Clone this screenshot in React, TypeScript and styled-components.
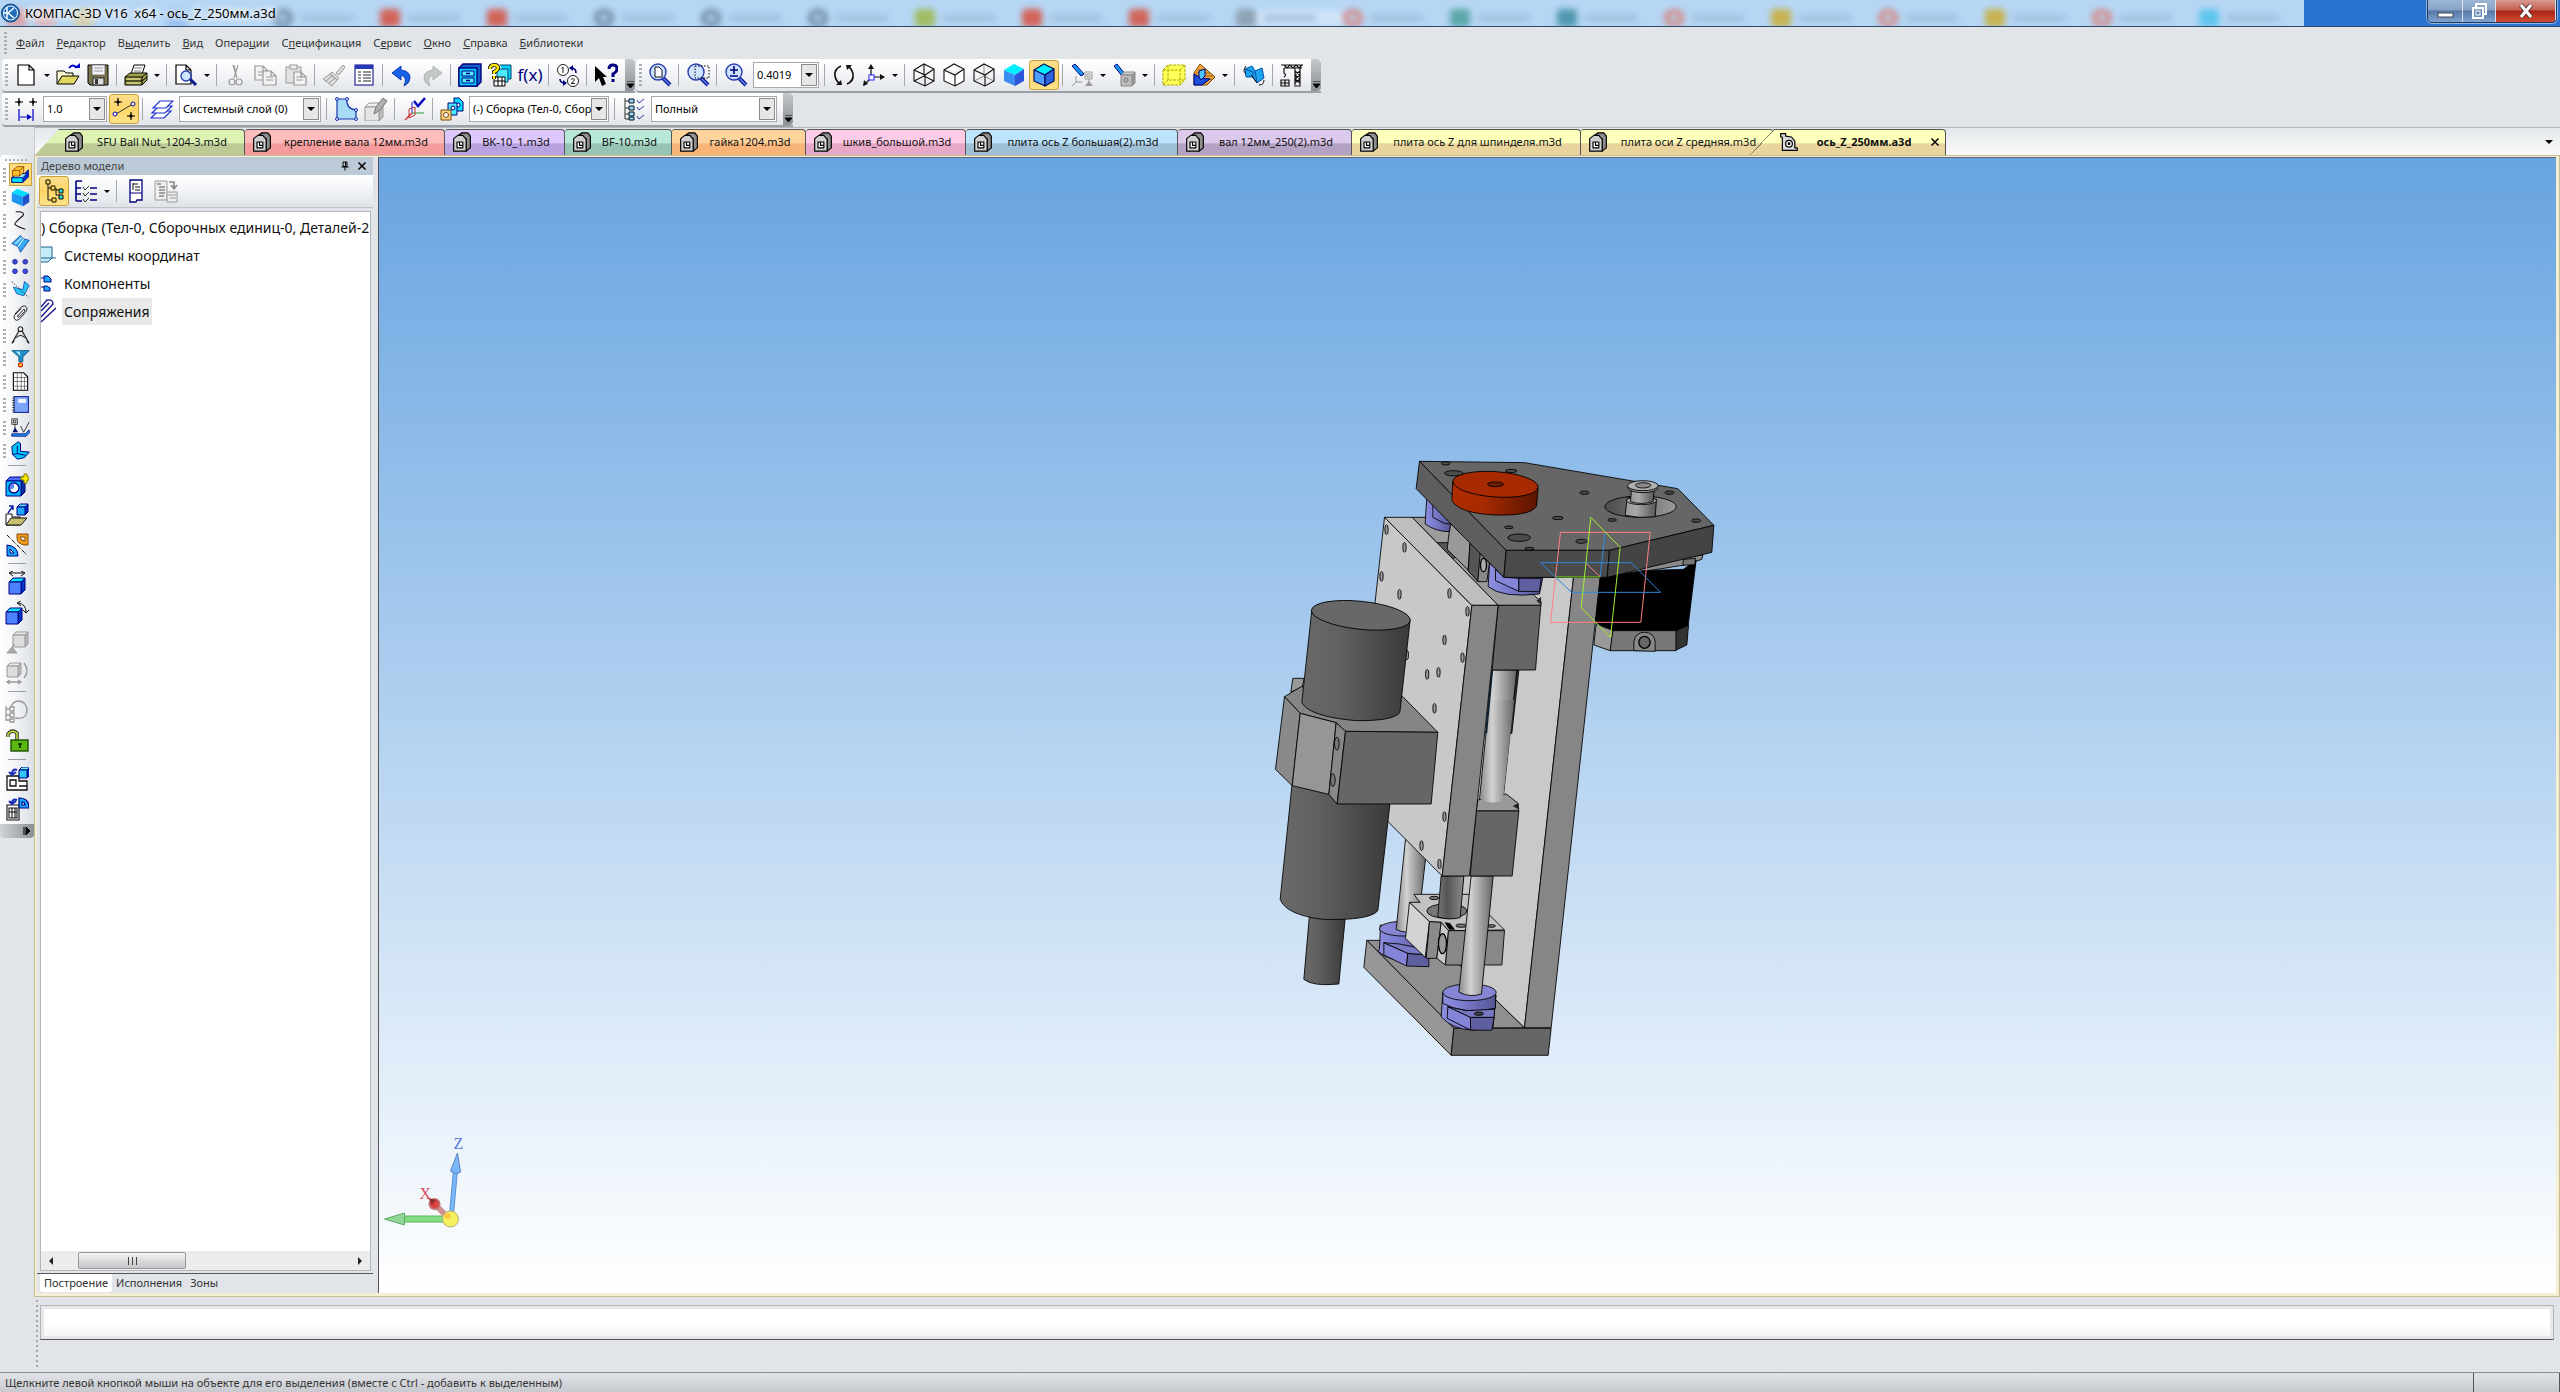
import React, { ReactNode } from "react";
import styled, { createGlobalStyle, css } from "styled-components";

const NAVY = "#000080";

const GlobalStyle = createGlobalStyle`
  * { box-sizing: border-box; }
  body { margin: 0; background: #e1e5e9; }
  button, select, input { font: inherit; color: inherit; margin: 0; }
  svg { display: block; }
`;

const Shell = styled.div`
  display: flex;
  flex-direction: column;
  height: 100vh;
  overflow: hidden;
  background: #e1e5e8;
  color: #111;
  font: 11px/16px "Noto Sans", "Open Sans", sans-serif;
`;

/* ---------- icons ---------- */

const Cube = ({ top = "#00f0ff", left = "#3a8cf0", right = "#2c55d8", line = "none" }) => (
  <g stroke={line} strokeWidth="1.2" strokeLinejoin="round">
    <path d="M2 7 L12 1 L22 6 L13 12 Z" fill={top} />
    <path d="M2 7 L13 12 V23 L2 18 Z" fill={left} />
    <path d="M22 6 L13 12 V23 L22 18 Z" fill={right} />
  </g>
);
const Box3 = ({ x = 4, y = 5, s = 12, d = 4, a = "#4d82ff", b = "#00e4ff", c = "#0038c8", k = NAVY }) => (
  <g stroke={k} strokeLinejoin="round">
    <path d={`M${x} ${y + d} l${d} ${-d} h${s} l${-d} ${d} z`} fill={b} />
    <path d={`M${x + s} ${y + d} l${d} ${-d} v${s} l${-d} ${d} z`} fill={c} />
    <rect x={x} y={y + d} width={s} height={s} fill={a} />
  </g>
);
const Lens = () => (
  <>
    <path d="M15 15 L22 22" stroke="#0a1a90" strokeWidth="4" />
    <path d="M15 15 L22 22" stroke="#6a8cff" strokeWidth="1.2" />
    <circle cx="10" cy="9" r="8" fill="#cfe4ff" stroke="#2a3fae" strokeWidth="1.4" />
  </>
);
const Page = ({ x = 4, y = 2, w = 14, h = 20, fill = "#fff", k = "#000" }) => (
  <path d={`M${x} ${y} h${w - 5} l5 5 v${h - 5} h${-w} z m${w - 5} 0 v5 h5`} fill={fill} stroke={k} strokeWidth="1.2" />
);
const Protractor = ({ x = 0, y = 0, fill = "#19a8ff", k = NAVY }) => (
  <path transform={`translate(${x} ${y})`} d="M0 0 Q10 0 10 10 H0 Z M3 4 Q6 4 6 7 H3 Z" fill={fill} stroke={k} fillRule="evenodd" strokeWidth="1.2" />
);

const icons: Record<string, ReactNode> = {
  newDoc: <Page x={4} y={2} w={16} h={20} />,
  open: (
    <>
      <path d="M1 21 V8 h7 l2 2 h7 v4" fill="#fffbd0" stroke="#000" />
      <path d="M1 21 L6 13 H23 L18 21 Z" fill="#e0d860" stroke="#000" />
      <path d="M13 5 q4 -5 8 0" fill="none" stroke="#00c" strokeWidth="2" />
      <path d="M18 5 h6 v-5 z" fill="#00c" />
    </>
  ),
  save: (
    <>
      <path d="M2 2 H22 V22 H4 L2 20 Z" fill="#7b7550" stroke="#000" />
      <rect x="6" y="2" width="13" height="10" fill="#f4f4f8" stroke="#555" strokeWidth=".7" />
      <path d="M8 5 h9 M8 8 h9" stroke="#999" />
      <rect x="7" y="15" width="11" height="7" fill="#ddd" stroke="#222" />
      <rect x="9" y="16" width="3" height="5" fill="#333" />
    </>
  ),
  print: (
    <>
      <path d="M7 11 L10 2 H21 L18 11 Z" fill="#fff" stroke="#000" />
      <path d="M10 5 h8 M10 8 h7" stroke="#777" />
      <path d="M1 14 L6 10 H23 V17 L18 22 H1 Z" fill="#a5a04c" stroke="#000" />
      <path d="M1 14 H18 L23 10 M18 14 V22 M1 18 H18 L23 14" fill="none" stroke="#000" />
      <path d="M3 16 H16 M3 20 H16" stroke="#eee8a0" />
    </>
  ),
  preview: (
    <>
      <Page x={2} y={2} w={15} h={19} />
      <path d="M16 16 L22 22" stroke="#0a1a90" strokeWidth="3" />
      <circle cx="12" cy="13" r="5" fill="#cfe4ff" stroke="#2a3fae" strokeWidth="1.4" />
    </>
  ),
  cut: (
    <g fill="none" stroke="#999" strokeWidth="1.2">
      <path d="M9 2 L13 15 M14 2 L10 15 M10 2 L12 12" />
      <circle cx="8" cy="19" r="3" />
      <circle cx="15" cy="19" r="3" />
    </g>
  ),
  copy: (
    <>
      <Page x={1} y={3} w={13} h={14} fill="#f2f2f2" k="#999" />
      <Page x={9} y={8} w={13} h={14} fill="#f2f2f2" k="#999" />
      <path d="M4 9 h6 M4 12 h4 M12 14 h7 M12 17 h7" stroke="#999" />
    </>
  ),
  paste: (
    <>
      <rect x="2" y="4" width="15" height="16" fill="#e2e2e2" stroke="#999" />
      <rect x="6" y="2" width="7" height="4" fill="#eee" stroke="#999" />
      <Page x={10} y={9} w={12} h={13} fill="#f4f4f4" k="#999" />
      <path d="M12 14 h7 M12 17 h7" stroke="#999" />
    </>
  ),
  brush: (
    <g stroke="#999" fill="#dedede">
      <path d="M14 10 L21 2 L23 4 L17 12 Z" />
      <path d="M10 9 L17 15 L15 17 L8 11 Z" />
      <path d="M8 11 L15 17 L10 23 Q5 19 1 16 Z" />
      <path d="M4 18 L10 13 M7 20 L13 15" />
    </g>
  ),
  props: (
    <>
      <rect x="3" y="2" width="18" height="20" fill="#fff" stroke={NAVY} />
      <rect x="3" y="2" width="18" height="4" fill="#2438b8" />
      <path d="M6 9 h3 M11 9 h8 M6 12 h3 M11 12 h8 M6 15 h3 M11 15 h8 M6 18 h3 M11 18 h8" stroke="#223" />
    </>
  ),
  undo: <path d="M2 10 L11 3 V7 Q20 8 20 15 Q20 20 14 23 Q18 14 11 12 V17 Z" fill="#1763e8" stroke="#0a3dab" />,
  redo: <path d="M22 10 L13 3 V7 Q4 8 4 15 Q4 20 10 23 Q6 14 13 12 V17 Z" fill="#c4c8c8" stroke="#b0b4b4" />,
  cabinet: (
    <>
      <path d="M1 5 L5 1 H23 V19 L19 23 H1 Z" fill="#1060c8" stroke={NAVY} strokeWidth="1.4" />
      <rect x="1" y="5" width="18" height="18" fill="#00cfff" stroke={NAVY} strokeWidth="1.4" />
      <path d="M4 8 h12 v5 h-12 z M4 15 h12 v5 h-12 z" fill="#58e8ff" stroke={NAVY} />
      <path d="M8 10.500 h4 M8 17.500 h4" stroke={NAVY} strokeWidth="1.6" />
    </>
  ),
  askTable: (
    <>
      <path d="M12 2 h11 v14 h-4" fill="#00cfff" stroke="#046" />
      <path d="M9 6 h11 v13 h-11 z" fill="#4de9ff" stroke="#046" />
      <path d="M6 14 h11 v9 h-11 z M6 18 h11 M10 14 v9 M14 14 v9" fill="#fff" stroke="#000" />
      <path d="M2 6 Q2 2 6 2 Q10 2 10 5 Q10 7 6 9 V11 M6 13 v3" fill="none" stroke="#000" strokeWidth="4" />
      <path d="M2 6 Q2 2 6 2 Q10 2 10 5 Q10 7 6 9 V11 M6 13 v3" fill="none" stroke="#ffe900" strokeWidth="2.400" />
    </>
  ),
  swap12: (
    <>
      <g fill="#fff" stroke="#222">
        <circle cx="7" cy="7" r="5.500" />
        <circle cx="17" cy="18" r="5.500" />
      </g>
      <path d="M7 4 v6 M5.500 5.500 L7 4 M15 16.500 q2 -2 3.500 0 q0 2 -3.500 4 h4" fill="none" stroke="#222" />
      <path d="M15 5 q5 0 5 5 M9 20 q-5 0 -5 -4" fill="none" stroke={NAVY} strokeWidth="1.6" />
      <path d="M13 5 l4 -3 v6 z M11 20 l-4 -3 v6 z" fill={NAVY} />
    </>
  ),
  help: (
    <>
      <path d="M1 3 V19 L5 15 L8 23 L12 21 L9 14 H13 Z" fill="#000" />
      <path d="M15 6 Q15 2 19 2 Q23 2 23 6 Q23 9 19 11 V14 M19 16 v3" fill="none" stroke={NAVY} strokeWidth="3" />
    </>
  ),
  zoomDoc: (
    <>
      <Lens />
      <path d="M7 4 h4 l3 3 v7 h-7 z" fill="#fff" stroke="#112" />
    </>
  ),
  zoomRect: (
    <>
      <Lens />
      <rect x="9" y="3" width="14" height="12" fill="none" stroke="#000" strokeDasharray="1.5 1.5" />
    </>
  ),
  zoomPM: (
    <>
      <Lens />
      <path d="M6 7 h8 M10 3 v8 M6 13 h8" stroke={NAVY} strokeWidth="1.6" />
    </>
  ),
  rotate: (
    <>
      <path d="M9 3 Q2 6 3 13 Q4 18 8 21 M15 21 Q22 18 21 11 Q20 6 16 3" fill="none" stroke="#111" strokeWidth="1.6" />
      <path d="M14 2 h6 l-5 5 z M10 22 h-6 l5 -5 z" fill="#111" />
    </>
  ),
  orient: (
    <>
      <path d="M9 13 V3 M11 14 H22 M8 16 L2 22" fill="none" stroke="#111" strokeWidth="1.2" />
      <path d="M9 1 l3 5 h-6 z M23 14 l-5 -3 v6 z M1 23 l1 -6 l4 4 z" fill="#111" />
      <rect x="7" y="12" width="5" height="5" fill="#fff" stroke="#22f" />
    </>
  ),
  wire: (
    <g fill="none" stroke="#111" strokeWidth="1.1">
      <path d="M2 7 L12 1 L22 6 V18 L13 23 L2 18 Z M2 7 L13 12 L22 6 M13 12 V23" />
      <path d="M12 1 V13 M2 18 L12 13 L22 18" />
    </g>
  ),
  hidden: <path d="M2 7 L12 1 L22 6 V18 L13 23 L2 18 Z M2 7 L13 12 L22 6 M13 12 V23" fill="#fff" stroke="#111" strokeWidth="1.1" />,
  thin: (
    <g fill="none" strokeWidth="1.1">
      <path d="M12 1 V13 M2 18 L12 13 L22 18" stroke="#999" />
      <path d="M2 7 L12 1 L22 6 V18 L13 23 L2 18 Z M2 7 L13 12 L22 6 M13 12 V23" stroke="#111" />
    </g>
  ),
  shade: <Cube />,
  shadeLine: <Cube left="#4d9dff" right="#2b62e0" line="#001060" />,
  torchDim: (
    <>
      <path d="M2 3 L5 1 L14 11 L11 13 Z" fill="#1696f0" stroke={NAVY} />
      <path d="M15 9 h7 v7 h-7 z M17 11 h3 v3 h-3 z M19 16 v4 M6 13 v6 h6 M6 19 l-4 4" fill="none" stroke="#999" />
      <path d="M15 23 h8 l-4 -5 z" fill="#999" />
    </>
  ),
  torchBox: (
    <>
      <path d="M2 3 L5 1 L13 11 L10 13 Z" fill="#1696f0" stroke={NAVY} />
      <Box3 x={9} y={9} s={11} d={3} a="#bbb" b="#ccc" c="#999" k="#888" />
      <circle cx="14" cy="17" r="2" fill="none" stroke="#777" />
    </>
  ),
  yellowCube: (
    <>
      <path d="M1 7 L6 2 H23 V17 L18 22 H1 Z" fill="#ffff5a" />
      <g fill="none" stroke="#b0ac00" strokeDasharray="3 1">
        <path d="M1 7 L6 2 H23 V17 L18 22 H1 Z M1 7 H18 V22 M18 7 L23 2" />
        <path d="M6 2 V17 H23 M6 17 L1 22" />
      </g>
    </>
  ),
  section: (
    <>
      <path d="M2 10 L8 1 L23 14 L15 22 H2 Z" fill="#f2a83c" stroke="#7a4a00" />
      <path d="M6 7 h8 M4 10 h14 M4 13 h17 M5 16 h15" stroke="#7a4a00" strokeWidth=".8" />
      <path d="M2 11 L9 15 L18 16 L10 22 H2 Z" fill="#1b50d8" stroke={NAVY} />
      <path d="M7 14 V8 L13 6 V13 L9 17 Z" fill="#4dc8ff" stroke={NAVY} />
    </>
  ),
  rebuild: (
    <>
      <path d="M3 6 L10 3 L13 8 L20 5 L22 15 L15 20 L11 14 L4 14 Z" fill="#1ba4ee" stroke="#0552b0" />
      <path d="M3 6 L11 9 V14 M13 8 l2 12" fill="none" stroke="#0552b0" />
      <path d="M4 3 q-4 5 0 8 M9 12 L15 20 M17 22 q5 0 5 -5" fill="none" stroke="#111" />
    </>
  ),
  crane: (
    <g fill="none" stroke="#111" strokeWidth="1.2">
      <path d="M1 2 H23 M4 5 H22 M4 2 l3 3 l3 -3 l3 3 l3 -3 l3 3 l3 -3" />
      <path d="M15 5 V22 M20 5 V22 M15 8 l5 4 l-5 4 l5 4 M20 8 l-5 4 l5 4 l-5 4 M14 23 h7" />
      <path d="M4 5 v5 q3 2 0 4 M1 17 h8 v6 h-8 z M5 17 v6 M1 20 h8" />
    </g>
  ),
  step: (
    <>
      <path d="M5 1 v8 M1 5 h8 M19 1 v8 M15 5 h8" stroke="#000" strokeWidth="1.2" />
      <path d="M5 3 l2 2 l-2 2 l-2 -2 z M19 3 l2 2 l-2 2 l-2 -2 z" fill="#000" />
      <path d="M5 12 v12 M19 12 v12 M6 20 h10" stroke="#0000c8" strokeWidth="1.2" />
      <path d="M18 20 l-5 -3 v6 z" fill="#0000c8" />
    </>
  ),
  snap: (
    <>
      <path d="M6 1 v8 M2 5 h8 M19 15 v8 M15 19 h8" stroke="#000" strokeWidth="1.2" />
      <path d="M6 3 l2 2 l-2 2 l-2 -2 z M19 17 l2 2 l-2 2 l-2 -2 z" fill="#000" />
      <path d="M4 17 L19 8" stroke="#333" />
      <circle cx="3" cy="17" r="2" fill="#fff" stroke="#00a" />
      <circle cx="21" cy="7" r="2" fill="#fff" stroke="#00a" />
    </>
  ),
  layers: (
    <g fill="#fff" stroke="#2030d0" strokeWidth="1.2">
      <path d="M1 21 L8 14 H21 L14 21 Z" />
      <path d="M2 16 L9 9 H22 L15 16 Z" />
      <path d="M3 11 L10 4 H23 L16 11 Z" />
    </g>
  ),
  sketch: (
    <>
      <path d="M3 2 H13 Q12 12 22 13 V22 H3 Z" fill="#a8dcf4" stroke="#1636b0" strokeWidth="1.2" />
      <g fill="#dfe8ff" stroke="#1636b0">
        <circle cx="3" cy="2" r="1.500" />
        <circle cx="13" cy="2" r="1.500" />
        <circle cx="22" cy="13" r="1.500" />
        <circle cx="22" cy="22" r="1.500" />
        <circle cx="3" cy="22" r="1.500" />
      </g>
    </>
  ),
  editGray: (
    <>
      <Box3 x={1} y={6} s={14} d={4} a="#e4e4e4" b="#eee" c="#bbb" k="#999" />
      <path d="M10 17 L12 10 L19 1 L23 4 L16 13 Z" fill="#b0b0b0" stroke="#777" />
    </>
  ),
  axes: (
    <>
      <path d="M10 5 V16" stroke="#22c" />
      <path d="M10 16 H22" stroke="#2a9a3a" />
      <path d="M10 16 L3 23" stroke="#d33" strokeWidth="1.500" />
      <path d="M7 12 l6 -2 v8 l-6 3 z" fill="none" stroke="#b33" />
      <path d="M12 4 L16 9 L23 1" fill="none" stroke="#0a0ac0" strokeWidth="2.500" />
    </>
  ),
  assembly: (
    <>
      <path d="M14 1 h5 l4 4 v9 h-9 z" fill="#00dcff" stroke={NAVY} />
      <circle cx="18" cy="8" r="2" fill="#fff" stroke={NAVY} />
      <path d="M8 6 h9 v12 h-9 z" fill="#4de9ff" stroke={NAVY} />
      <circle cx="13" cy="11" r="2" fill="#fff" stroke={NAVY} />
      <path d="M1 13 h10 v10 h-10 z" fill="#ffcf8a" stroke="#7a4a00" />
      <circle cx="6" cy="18" r="2.500" fill="#fff" stroke="#7a4a00" />
    </>
  ),
  treeCheck: (
    <>
      <path d="M3 1 V22 M3 4 h4 M3 11 h4 M3 17 h4 M3 22 h4" fill="none" stroke="#333" />
      <path d="M7 2 h5 v4 h-5 z M7 9 h5 v4 h-5 z M7 15 h5 v4 h-5 z M7 20 h5 v3 h-5 z" fill="#9ad8f0" stroke="#012" />
      <path d="M15 3 l2 3 l5 -4 M15 10 l2 3 l5 -4 M15 19 l2 3 l5 -4" fill="none" stroke="#33a" />
    </>
  ),
  part: (
    <g stroke="#000" strokeWidth="1.4" strokeLinejoin="round">
      <path d="M8 4 L12 1 H19 L22 5 V19 L17 23 V8 H8 Z" fill="#8e8e8e" />
      <path d="M2 8 L7 4 H13 L17 9 V23 H2 Z" fill="#d0d0d0" />
      <rect x="6" y="12" width="7" height="7" fill="#fff" />
      <path d="M9 12 v4 h4" fill="none" />
    </g>
  ),
  asm: (
    <g stroke="#000" strokeWidth="1.4" strokeLinejoin="round">
      <path d="M2 2 h6 v3 l7 1 l4 5 v8 h3 v3 H4 V6 H2 Z" fill="#d8d8d8" />
      <circle cx="12" cy="14" r="4" fill="#fff" />
      <circle cx="12" cy="14" r="1" fill="#000" />
    </g>
  ),
  tree: (
    <>
      <path d="M6 3 V21 h6 M6 9 h5 M14 9 V16 h4 M14 11 h4" fill="none" stroke="#111" />
      <path d="M4 1 h4 v4 h-4 z M9 7 h4 v4 h-4 z M10 19 h4 v4 h-4 z" fill="#ffd84a" stroke="#111" />
      <path d="M17 10 h4 v4 h-4 z M17 16 h4 v4 h-4 z" fill="#30d8c8" stroke="#111" />
    </>
  ),
  listMode: (
    <>
      <path d="M2 2 V22 M2 2 h6 M2 9 h5 M2 15 h5 M2 22 h6 M16 9 h7 M16 15 h7 M16 21 h7" fill="none" stroke={NAVY} strokeWidth="1.6" />
      <path d="M9 8 l2 3 l4 -4 M9 14 l2 3 l4 -4 M9 20 l2 3 l4 -4" fill="none" stroke="#333" />
    </>
  ),
  docTree: (
    <>
      <path d="M6 1 h12 v20 h-5 l-1 2 h-6 z" fill="#fff" stroke={NAVY} strokeWidth="1.3" />
      <path d="M9 4 v7 M9 5 h5 M11 8 h5 M11 11 h5" stroke="#111" fill="none" />
      <path d="M6 14 h12" stroke={NAVY} />
    </>
  ),
  docGray: (
    <>
      <path d="M1 2 h12 v19 h-12 z" fill="#eee" stroke="#999" />
      <path d="M3 5 h4 M5 8 h6 M5 11 h6 M5 14 h6 M5 17 h5" stroke="#888" strokeWidth="1.6" />
      <path d="M13 13 h10 v10 h-10 z M14 16 h8 M16 19 h6" fill="#eee" stroke="#999" />
      <path d="M15 3 h5 v6 M17 6 l3 4 l3 -4" fill="none" stroke="#888" strokeWidth="1.6" />
    </>
  ),
  pinned: <path d="M8 4 h8 v9 h-8 z M13 4 v9 M5 14 h14 M12 14 v7" fill="none" stroke="#000" strokeWidth="2" />,
  close: <path d="M5 5 L19 19 M19 5 L5 19" stroke="#000" strokeWidth="3" />,
  solid: (
    <g stroke={NAVY} strokeLinejoin="round">
      <path d="M1 16 L8 11 H17 L22 6 V15 L15 22 H1 Z" fill="#0030d0" />
      <path d="M1 16 H15 V22 H1 Z" fill="#00e4ff" />
      <path d="M1 16 L8 11 H20 L15 16 Z" fill="#8cf0ff" />
      <path d="M2 7 L8 2 H16 V9 L11 14 H2 Z" fill="#ffc02e" stroke="#8a3c00" />
      <path d="M2 7 H11 V14 M11 7 L16 2" fill="none" stroke="#8a3c00" />
    </g>
  ),
  cubeBlue: (
    <>
      <path d="M1 6 L8 1 L23 7 L15 11 Z" fill="#00dcff" />
      <path d="M1 6 L15 11 V23 L1 17 Z" fill="#1c96f2" />
      <path d="M15 11 L23 7 V18 L15 23 Z" fill="#1e50c8" />
    </>
  ),
  curve: <path d="M6 1 Q18 0 15 6 Q4 15 5 17 Q8 20 18 23" fill="none" stroke="#111" strokeWidth="1.4" />,
  surface: (
    <>
      <path d="M1 12 L12 2 L16 6 L23 8 L12 23 L9 16 Z" fill="#37a8f2" stroke="#103e9c" />
      <path d="M9 16 L16 6 M5 13 L14 4" stroke="#c0ecff" strokeWidth="1.500" />
    </>
  ),
  dots: (
    <g fill="#3d4ad8" stroke="#1a1f90">
      <circle cx="5" cy="6" r="3" />
      <circle cx="18" cy="6" r="3" />
      <circle cx="5" cy="18" r="3" />
      <circle cx="18" cy="18" r="3" />
    </g>
  ),
  aux: (
    <>
      <path d="M3 9 L15 12 L17 2 L23 7 L16 20 L7 17 Z" fill="#27c4f4" stroke="#0a4ab0" />
      <path d="M1 2 L22 22" stroke="#111" strokeDasharray="2 1.5" />
    </>
  ),
  clip: <path d="M5 14 L13 5 Q18 2 20 6 Q21 9 18 12 L11 20 Q6 24 4 19 Q3 16 6 14 L13 7 M9 16 L16 8 Q19 8 17 11 L10 18 Q7 18 9 15" fill="none" stroke="#222" strokeWidth="1.2" />,
  compass: (
    <>
      <path d="M12 1 a3 3 0 1 1 -.1 0 M10 6 L1 22 L4 19 M14 6 L23 22 L20 19 M6 15 Q12 9 18 15" fill="none" stroke="#111" strokeWidth="1.3" />
      <path d="M10 8 L4 19 M14 8 L20 19" stroke="#888" />
    </>
  ),
  filter: (
    <>
      <path d="M1 2 H23 L15 10 V16 H10 V10 Z" fill="#1c90c8" stroke="#0a5080" />
      <path d="M6 3 h5 l1 6 z" fill="#b6ecff" />
      <circle cx="12" cy="20" r="2.500" fill="#ffe840" stroke="#d01800" strokeWidth="1.500" />
    </>
  ),
  grid: (
    <>
      <path d="M3 1 H16 L21 6 V23 H3 Z" fill="#fff" stroke="#000" strokeWidth="1.4" />
      <path d="M3 7 H21 M3 12 H21 M3 18 H21 M8 1 V23 M13 1 V23 M17 6 V23" stroke="#555" strokeWidth=".9" />
    </>
  ),
  book: (
    <>
      <rect x="4" y="2" width="18" height="20" fill="#7ca4f8" stroke="#1a2c90" strokeWidth="1.4" />
      <rect x="9" y="5" width="10" height="5" fill="#eef4ff" />
      <path d="M3 3 V22" stroke="#333" strokeWidth="2.500" strokeDasharray="1.5 1.5" />
    </>
  ),
  rough: (
    <>
      <path d="M1 1 h7 v7 h-7 z M3 3 h3 v3 h-3 z M5 8 v10" fill="none" stroke="#111" />
      <path d="M2 18 h7 l-4 -6 z" fill="#000a60" />
      <path d="M12 10 l4 8 l7 -13" fill="none" stroke="#111" />
      <path d="M1 20 h17 l5 -5 v4 l-4 4 h-18 z" fill="#1c96f2" stroke={NAVY} />
    </>
  ),
  angle: (
    <g stroke={NAVY} strokeLinejoin="round" strokeWidth="1.2">
      <path d="M1 7 L9 1 L12 3 V13 L23 14 L17 21 L8 23 L2 17 Z" fill="#00c4f4" />
      <path d="M8 6 V16 L2 17 M8 16 L18 18" fill="none" />
    </g>
  ),
  addHole: (
    <>
      <Box3 x={1} y={4} s={15} d={4} a="#00b8ff" b="#4d6cff" c="#0030a0" />
      <circle cx="9" cy="15" r="5" fill="#fff" stroke={NAVY} strokeWidth="1.4" />
      <path d="M9 10 a5 5 0 0 0 -4 7 l4 -2 z" fill="#5f84f4" />
      <path d="M16 4 h3 v-3 h3 v3 h2 v3 h-2 v3 h-3 v-3 h-3 z" fill="#ffee00" stroke="#8a8000" />
    </>
  ),
  fromFile: (
    <>
      <path d="M1 22 V11 h6 v3 h8 v8 z" fill="#fff" stroke="#111" />
      <path d="M1 22 L6 15 H22 L16 22 Z" fill="#c8c070" stroke="#111" />
      <Box3 x={12} y={1} s={8} d={3} a="#1ba8ff" b="#5fe0ff" c="#0030c8" />
      <path d="M3 10 L8 3 M4 3 h4 v4" fill="none" stroke="#0a1aa0" strokeWidth="1.4" />
    </>
  ),
  mirror: (
    <>
      <path d="M2 2 L22 22" stroke="#111" strokeDasharray="4 1 1 1" />
      <path d="M12 1 h11 v11 h-3 q-8 -1 -8 -7 z M15 4 h5 v4 q-4 0 -5 -4 z" fill="#f09a20" fillRule="evenodd" stroke="#8a4a00" />
      <path d="M2 12 v11 h11 q0 -10 -11 -11 z M5 16 v4 h4 z" fill="#1ba8ff" fillRule="evenodd" stroke={NAVY} />
    </>
  ),
  moveBox: (
    <>
      <path d="M5 2 h14 M8 0 l-4 2 l4 3 M16 0 l4 2 l-4 3" fill="none" stroke="#111" />
      <Box3 x={4} y={7} s={12} d={4} />
    </>
  ),
  turnBox: (
    <>
      <Box3 x={1} y={7} s={12} d={4} />
      <path d="M13 2 Q21 3 21 11 M16 0 l-4 2 l4 3 M18 9 l3 3 l3 -3" fill="none" stroke="#111" />
    </>
  ),
  grayFix: (
    <>
      <Box3 x={8} y={1} s={12} d={3} a="#ddd" b="#eee" c="#bbb" k="#999" />
      <path d="M2 22 h10 l-5 -6 z M7 16 l3 -3" fill="#aaa" stroke="#999" />
    </>
  ),
  grayTurn: (
    <>
      <Box3 x={2} y={2} s={11} d={3} a="#ddd" b="#eee" c="#bbb" k="#999" />
      <path d="M19 2 q6 8 0 15 M2 21 h14 M5 19 l-3 2 l3 2 M13 19 l3 2 l-3 2" fill="none" stroke="#999" strokeWidth="1.3" />
    </>
  ),
  grayLink: (
    <g fill="none" stroke="#999" strokeWidth="1.3">
      <path d="M6 8 Q8 2 14 2 Q22 3 22 12 Q21 21 10 19" />
      <path d="M1 7 V22 M1 10 h4 M1 16 h4 M1 21 h4 M5 8 h4 v4 h-4 z M5 14 h4 v4 h-4 z M5 20 h4 v3 h-4 z" />
    </g>
  ),
  lock: (
    <>
      <path d="M3 8 V5 Q7 0 12 4 V11" fill="none" stroke="#333" strokeWidth="3.500" />
      <path d="M3 8 V5 Q7 0 12 4 V11" fill="none" stroke="#c8e838" strokeWidth="1.500" />
      <rect x="6" y="11" width="17" height="11" fill="#5cb810" stroke="#1a5000" strokeWidth="1.4" />
      <path d="M13 15 h4 M15 15 v4" stroke="#002000" strokeWidth="1.500" />
    </>
  ),
  toDrawing: (
    <>
      <path d="M2 9 h12 v5 h8 v9 h-20 z M5 13 h6 v6 h-6 z M14 19 h8" fill="#fff" stroke="#111" strokeWidth="1.3" />
      <Box3 x={14} y={0} s={8} d={3} a="#2fc8ff" b="#6ff0ff" c="#0030c8" />
      <path d="M12 3 Q7 1 7 8 M4 5 l3 3 l4 -3" fill="none" stroke="#1a2ab8" strokeWidth="2" />
    </>
  ),
  toSpec: (
    <>
      <path d="M2 8 h12 v15 h-12 z M4 11 h8 v10 h-8 z M7 11 v10 M10 11 v10 M4 15 h8" fill="#fff" stroke="#111" strokeWidth="1.1" />
      <Protractor x={14} y={1} />
      <path d="M12 3 Q7 1 7 7 M4 4 l3 3 l4 -3" fill="none" stroke="#1a2ab8" strokeWidth="2" />
    </>
  ),
};

const Icon = ({ name, size = 24 }: { name: string; size?: number }) => (
  <svg width={size} height={size} viewBox="0 0 24 24" aria-hidden="true">
    {icons[name]}
  </svg>
);

/* ---------- title bar ---------- */

const TitleBar = styled.header`
  position: relative;
  flex: none;
  display: flex;
  align-items: center;
  justify-content: space-between;
  height: 27px;
  padding: 0 3px 0 1px;
  border-bottom: 1px solid #2f4a6c;
  background: linear-gradient(90deg, #b6d6f4 0 90%, #2a72cf 90% 100%);
  overflow: hidden;
`;
const Backdrop = styled.div`
  position: absolute;
  inset: 0;
  display: flex;
  align-items: flex-end;
  padding-left: 7px;
  filter: blur(3px);
  opacity: .85;
`;
const Ghost = styled.span<{ $w: number; $active?: boolean }>`
  display: flex;
  align-items: center;
  flex: none;
  gap: 8px;
  width: ${(p) => p.$w}px;
  height: 16px;
  ${(p) => p.$active && "background: #d4e7fa;"}
`;
const Favicon = styled.i<{ $c: string; $ring?: boolean }>`
  width: 20px;
  height: 18px;
  border-radius: ${(p) => (p.$ring ? "50%" : "4px")};
  ${(p) => (p.$ring ? `border: 5px solid ${p.$c};` : `background: ${p.$c};`)}
`;
const GhostText = styled.i`
  width: 52px;
  height: 6px;
  background: #9dbad8;
`;
const AppName = styled.h1`
  position: relative;
  display: flex;
  align-items: center;
  gap: 5px;
  margin: 0;
  font-size: 13px;
  font-weight: 400;
  line-height: 20px;
  white-space: pre;
  color: #000;
  text-shadow: 0 0 6px #fff, 0 0 6px #fff, 0 0 10px #fff;
`;
const WinButtons = styled.div`
  position: relative;
  align-self: flex-start;
  display: flex;
  height: 23px;
  border: 1px solid #1d3a66;
  border-top: 0;
  border-radius: 0 0 5px 5px;
  overflow: hidden;
  box-shadow: 0 0 0 1px #8fb4dc;
`;
const WinButton = styled.button<{ $w: number; $close?: boolean }>`
  display: grid;
  place-items: center;
  width: ${(p) => p.$w}px;
  padding: 0;
  border: 0;
  border-right: 1px solid #d8e4f2;
  background: ${(p) =>
    p.$close
      ? "linear-gradient(#d99a90, #c4604e 45%, #a82417 50%, #d24a30)"
      : "linear-gradient(#9db6d4, #86a2c6 45%, #5879a6 50%, #7fa2cf)"};
`;

const ghosts: [string, boolean?, boolean?][] = [
  ["#5d7894", true], ["#d8503e"], ["#d8503e"], ["#5d7894", true], ["#5d7894", true], ["#5d7894", true],
  ["#9db84a"], ["#d8503e"], ["#d8503e"], ["#8899aa", false, true], ["#dc7468", true], ["#4ba09c"], ["#3f8fa4"],
  ["#dc7468", true], ["#c8ac34"], ["#dc7468", true], ["#c8ac34"], ["#dc7468", true], ["#4fc3ec"],
];

/* ---------- menus and toolbars ---------- */

const MenuBar = styled.nav`
  flex: none;
  display: flex;
  align-items: center;
  height: 32px;
  padding-left: 1px;
`;
const MenuItem = styled.button`
  padding: 0 6px;
  border: 0;
  background: none;
  color: #333;
  line-height: 20px;
  white-space: nowrap;
`;
const Grip = styled.span`
  flex: none;
  width: 3px;
  height: 22px;
  margin: 0 3px;
  background: repeating-linear-gradient(#aab0b6 0 2px, transparent 2px 4px);
`;
const ToolRow = styled.div`
  flex: none;
  display: flex;
  gap: 1px;
  height: 34px;
  padding-left: 2px;
`;
const Bar = styled.div`
  display: flex;
  align-items: center;
  height: 34px;
  border-bottom: 2px solid #9aa0a6;
  border-radius: 4px 0 0 4px;
  background: linear-gradient(#fff, #f6f7f9 40%, #e2e5e9);
`;
const BarEnd = styled.span`
  align-self: stretch;
  display: flex;
  align-items: flex-end;
  justify-content: center;
  width: 10px;
  margin-left: 4px;
  padding-bottom: 2px;
  border-radius: 0 4px 4px 0;
  background: linear-gradient(#c4c7cc, #8c9096);
`;
const ToolButton = styled.button<{ $on?: boolean }>`
  flex: none;
  display: grid;
  place-items: center;
  width: 30px;
  height: 30px;
  padding: 0;
  border: 1px solid ${(p) => (p.$on ? "#c9a03c" : "transparent")};
  border-radius: 3px;
  background: ${(p) => (p.$on ? "linear-gradient(#fbdf8e, #ffd668 50%, #fde28a)" : "none")};
  font-size: 17px;
  color: ${NAVY};
`;
const DropButton = styled.button`
  flex: none;
  display: grid;
  place-items: center;
  width: 12px;
  height: 30px;
  padding: 0;
  border: 0;
  background: none;
`;
const Triangle = styled.i<{ $s?: number }>`
  border: ${(p) => p.$s || 3}px solid transparent;
  border-top-color: #000;
  border-bottom: 0;
`;
const Sep = styled.span`
  flex: none;
  width: 1px;
  height: 22px;
  margin: 0 4px 0 3px;
  background: #a4a8ae;
`;
const ComboBox = styled.label<{ $w: number }>`
  display: flex;
  align-items: center;
  width: ${(p) => p.$w}px;
  height: 26px;
  margin: 0 2px;
  padding-right: 1px;
  border: 1px solid #a8a8ac;
  background: #fff;
`;
const Select = styled.select`
  flex: 1;
  min-width: 0;
  height: 22px;
  padding: 0 0 0 3px;
  border: 0;
  appearance: none;
  background: transparent;
  color: #000;
  text-overflow: clip;
`;
const ComboArrow = styled.span`
  display: grid;
  place-items: center;
  width: 16px;
  height: 22px;
  border: 1px solid #8a8c90;
  background: #e6e6e6;
`;

const Combo = ({ label, value, w }: { label: string; value: string; w: number }) => (
  <ComboBox $w={w}>
    <Select aria-label={label} defaultValue={value}>
      <option>{value}</option>
    </Select>
    <ComboArrow>
      <Triangle $s={4} />
    </ComboArrow>
  </ComboBox>
);

const Overflow = () => (
  <BarEnd>
    <svg width="7" height="8" viewBox="0 0 7 8"><path d="M0 0 h7 M0 3 h7 l-3.5 4 z" stroke="#000" fill="#000" /></svg>
  </BarEnd>
);

const Tools = ({ items }: { items: string[] }) => (
  <>
    {items.map((it, i) => {
      if (it === "|") return <Sep key={i} />;
      if (it === "v") return <DropButton key={i} aria-label="Меню"><Triangle /></DropButton>;
      if (it === "fx") return <ToolButton key={i}>f(x)</ToolButton>;
      const on = it.startsWith("*");
      const name = on ? it.slice(1) : it;
      return <ToolButton key={i} $on={on} aria-label={name}><Icon name={name} /></ToolButton>;
    })}
  </>
);

/* ---------- document tabs ---------- */

const TabStrip = styled.div`
  flex: none;
  display: flex;
  align-items: flex-end;
  height: 28px;
  margin-left: 34px;
  border-top: 1px solid #b4b8bc;
  border-left: 1px solid #c8c8c8;
  background: linear-gradient(#e4e8eb, #fafafa);
`;
const Tab = styled.button<{ $w: number; $a: string; $b: string; $first?: boolean; $bold?: boolean }>`
  flex: none;
  display: flex;
  align-items: center;
  width: ${(p) => p.$w}px;
  height: 26px;
  padding: 0 4px 2px ${(p) => (p.$first ? 29 : 7)}px;
  border: 0;
  border-top: 1px solid #555;
  border-right: 1px solid #555;
  border-radius: 3px 4px 0 0;
  background: linear-gradient(${(p) => p.$a} 0 50%, ${(p) => p.$b} 56% 100%);
  color: #111;
  font-weight: ${(p) => (p.$bold ? 700 : 400)};
  white-space: nowrap;
  ${(p) => p.$first && css`clip-path: polygon(24px 0, 100% 0, 100% 100%, 0 100%);`}
  ${(p) => p.$bold && css`
    margin-left: -24px;
    padding-left: 29px;
    background:
      linear-gradient(to top left, transparent 49%, #666 49% 52%, transparent 52%) 0 0 / 24px 100% no-repeat,
      linear-gradient(${p.$a} 0 50%, ${p.$b} 56% 100%);
    clip-path: polygon(24px 0, 100% 0, 100% 100%, 0 100%);
  `}
`;
const TabLabel = styled.span`
  flex: 1;
  text-align: center;
`;
const StripMenu = styled(DropButton)`
  margin-left: auto;
  height: 27px;
  width: 22px;
`;

const tabs: [string, number, string, string][] = [
  ["SFU Ball Nut_1204-3.m3d", 210, "#def2b4", "#bccb96"],
  ["крепление вала 12мм.m3d", 200, "#ffbcbc", "#f49c9c"],
  ["BK-10_1.m3d", 120, "#dcc8fc", "#b8a2e0"],
  ["BF-10.m3d", 107, "#b8e8d8", "#98c4b4"],
  ["гайка1204.m3d", 134, "#ffd49c", "#f8b478"],
  ["шкив_большой.m3d", 160, "#ffcce8", "#e8a8c8"],
  ["плита ось Z большая(2).m3d", 212, "#bce4fc", "#a0c0d8"],
  ["вал 12мм_250(2).m3d", 174, "#dccaec", "#b4a2c4"],
  ["плита ось Z для шпинделя.m3d", 229, "#ffffbc", "#e8d49c"],
  ["плита оси Z средняя.m3d", 193, "#ffffbc", "#e8d49c"],
];

/* ---------- work area ---------- */

const Work = styled.div`
  flex: 1;
  display: flex;
  min-height: 0;
`;
const SideColumn = styled.aside`
  flex: none;
  width: 34px;
`;
const SideBar = styled.div`
  display: flex;
  flex-direction: column;
  align-items: center;
  padding-top: 4px;
  border-radius: 4px 4px 0 0;
  background: linear-gradient(90deg, #fff, #f4f6f8 40%, #dcdfe4);
`;
const SideGripTop = styled.span`
  width: 24px;
  height: 2px;
  margin-bottom: 2px;
  background: repeating-linear-gradient(90deg, #b0b4b8 0 2px, transparent 2px 4px);
`;
const SideItem = styled.div`
  display: flex;
  align-items: center;
  width: 31px;
  height: 23px;
`;
const SideGrip = styled(Grip)`
  height: 14px;
  margin: 0 3px 0 1px;
`;
const SideButton = styled.button<{ $on?: boolean; $big?: boolean }>`
  display: grid;
  place-items: center;
  width: ${(p) => (p.$big ? 30 : 23)}px;
  height: ${(p) => (p.$big ? 30 : 23)}px;
  padding: 0;
  border: 1px solid ${(p) => (p.$on ? "#c9a03c" : "transparent")};
  background: ${(p) => (p.$on ? "#ffdc7c" : "none")};
`;
const SideSep = styled.span`
  width: 18px;
  height: 1px;
  margin: 3px 0 4px;
  background: #9a9ea4;
`;
const SideEnd = styled.div`
  display: flex;
  align-items: center;
  justify-content: flex-end;
  height: 14px;
  padding-right: 3px;
  border-radius: 0 0 4px 4px;
  background: linear-gradient(90deg, #d0d3d8, #8c9096);
`;
const Frame = styled.main`
  flex: 1;
  display: flex;
  min-width: 0;
  padding: 1px 3px 3px 2px;
  border: 1px solid #c4bd98;
  background: #f4eed2;
`;
const Panel = styled.section`
  flex: none;
  display: flex;
  flex-direction: column;
  width: 341px;
  padding-right: 5px;
  background: #e1e5e9;
`;
const PanelHead = styled.h2`
  display: flex;
  align-items: center;
  gap: 5px;
  height: 18px;
  margin: 0;
  padding: 0 5px 0 4px;
  background: #bccad8;
  color: #444;
  font-size: 11px;
  font-weight: 400;
  span { flex: 1; }
`;
const HeadButton = styled.button`
  width: 12px;
  height: 12px;
  padding: 0;
  border: 0;
  background: none;
`;
const PanelTools = styled.div`
  display: flex;
  align-items: center;
  gap: 2px;
  height: 33px;
  padding-left: 2px;
  border-bottom: 1px solid #c0c4c8;
  background: linear-gradient(#fff, #f4f6f8 40%, #dfe3e8);
`;
const ToolGroup = styled.div`
  display: flex;
  align-items: center;
`;
const TreeBox = styled.div`
  flex: 1;
  display: flex;
  flex-direction: column;
  min-height: 0;
  margin: 3px 2px 2px 3px;
  border: 1px solid #b4b6b8;
  background: #fff;
`;
const TreeList = styled.ul`
  flex: 1;
  margin: 1px 0 0;
  padding: 0;
  overflow: hidden;
  list-style: none;
  font-size: 14px;
`;
const TreeRow = styled.li`
  display: flex;
  align-items: center;
  gap: 6px;
  height: 28px;
  white-space: nowrap;
  svg { flex: none; }
`;
const TreeText = styled.span<{ $root?: boolean; $sel?: boolean }>`
  padding: 0 ${(p) => (p.$root ? 0 : 2)}px;
  line-height: 27px;
  background: ${(p) => (p.$sel ? "#e9e9e9" : "none")};
`;
const ScrollBar = styled.div`
  display: flex;
  align-items: center;
  height: 19px;
  padding: 0 4px;
  background: #ececec;
`;
const ScrollArrow = styled.button<{ $right?: boolean }>`
  width: 12px;
  height: 18px;
  display: grid;
  place-items: center;
  padding: 0;
  border: 0;
  background: none;
  i {
    border: 4px solid transparent;
    border-${(p) => (p.$right ? "left" : "right")}-color: #222;
    border-${(p) => (p.$right ? "right" : "left")}: 0;
  }
`;
const ScrollTrack = styled.div`
  flex: 1;
  padding-left: 21px;
`;
const ScrollThumb = styled.div`
  display: flex;
  align-items: center;
  justify-content: center;
  gap: 3px;
  width: 108px;
  height: 17px;
  border: 1px solid #989898;
  border-radius: 2px;
  background: linear-gradient(#f6f6f6, #dcdcde 50%, #c6c6ca);
  i { width: 1px; height: 8px; background: #444; }
`;
const PanelTabs = styled.div`
  display: flex;
  height: 20px;
  padding: 0 0 1px 3px;
  border-top: 1px solid #555;
`;
const PanelTab = styled.button<{ $on?: boolean }>`
  padding: 0 4px;
  border: 0;
  border-radius: 0 0 3px 3px;
  background: ${(p) => (p.$on ? "#fff" : "none")};
  color: #333;
  line-height: 16px;
  white-space: nowrap;
`;
const Viewport = styled.div`
  flex: 1;
  min-width: 0;
  border-left: 1px solid #555;
  border-top: 1px solid #667;
  background: linear-gradient(#67a4e1, #fff);
  svg { width: 100%; height: 100%; }
`;

/* ---------- bottom ---------- */

const Properties = styled.div`
  flex: none;
  display: flex;
  gap: 2px;
  height: 75px;
  padding: 3px 6px 5px 36px;
`;
const LongGrip = styled.span`
  width: 2px;
  background: repeating-linear-gradient(#a4a8ac 0 2px, transparent 2px 5px);
`;
const PropInput = styled.input`
  flex: 1;
  height: 35px;
  margin-top: 5px;
  border: 1px solid #b0b4b8;
  border-bottom: 1px solid #555;
  background: linear-gradient(#fff 50%, #f2f3f5);
  box-shadow: inset 0 0 0 3px #e8e8ea;
  outline: none;
`;
const StatusBar = styled.footer`
  flex: none;
  display: flex;
  align-items: center;
  height: 20px;
  border-top: 1px solid #8a8e94;
  background: linear-gradient(#e2e4e8, #c6c9ce);
  color: #333;
  p { flex: 1; margin: 0; padding: 1px 0 0 5px; }
`;
const StatusCell = styled.span`
  width: 87px;
  height: 19px;
  border-left: 1px solid #555;
  border-right: 1px solid #555;
`;

/* ---------- 3D scene ---------- */

const P = ({ d, f, k = "#000" }: { d: string; f: string; k?: string }) => <polygon points={d} fill={f} stroke={k} />;

const shade = (id: string, a: string, b: string, c: string) => (
  <linearGradient id={id} x1="0" x2="1">
    <stop offset="0" stopColor={a} />
    <stop offset=".35" stopColor={b} />
    <stop offset="1" stopColor={c} />
  </linearGradient>
);

const topHoles = [
  [559, 70, 13, 5], [755, 93, 17, 5], [975, 158, 14, 5], [895, 234, 16, 5], [748, 262, 13, 4], [779, 293, 34, 11],
  [810, 326, 14, 4], [966, 304, 17, 6], [1058, 240, 13, 4], [1310, 242, 14, 5], [1230, 158, 14, 5], [583, 100, 28, 8],
];
const plateHoles = [
  [381, 269], [435, 322], [366, 409], [420, 463], [570, 460], [624, 514], [555, 600], [609, 653], [537, 697],
  [503, 703], [525, 805], [442, 645], [555, 1130], [486, 1217], [540, 1272],
];

const Scene = () => (
  <svg viewBox="380 158 2176 1135" preserveAspectRatio="xMidYMid meet" role="img" aria-label="Модель оси Z">
    <defs>
      {shade("dark", "#6a6a6a", "#606060", "#3a3a3a")}
      {shade("rod", "#8c8c8c", "#d2d2d2", "#666")}
      {shade("screw", "#777", "#555", "#8c8c8c")}
      {shade("violet", "#8f8fe0", "#7c7cd0", "#555594")}
      {shade("red", "#b02c00", "#a82a00", "#5a1400")}
      {shade("steel", "#999", "#aaa", "#555")}
      {shade("well", "#4a4a4a", "#666", "#9a9a9a")}
    </defs>
    <g transform="translate(1260 440) scale(.33333)" strokeWidth="2.600" strokeLinejoin="round">
      {/* bed */}
      <P d="322,1501 500,1501 585,1560 795,1763 583,1765" f="#8f8f8f" />
      <P d="322,1501 583,1765 575,1846 313,1582" f="#979797" />
      <P d="583,1765 875,1765 866,1846 575,1846" f="#666" />
      {/* back plate */}
      <P d="705,412 942,412 795,1763 585,1560 612,1310" f="#c9c9c9" />
      <P d="942,412 1022,412 875,1763 795,1763" f="#868686" />
      {/* rear rod and foot */}
      <path d="M362 1455 Q362 1530 357 1535 Q390 1565 445 1560 L508 1540 V1470 Z" fill="url(#violet)" stroke="#000" />
      <ellipse cx="430" cy="1466" rx="70" ry="22" fill="#8585d4" stroke="#000" />
      <P d="373,1508 445,1540 441,1578 373,1545" f="#8484d8" />
      <P d="445,1540 508,1545 508,1580 441,1578" f="#5e5ea0" />
      <P d="373,1508 420,1512 508,1530 508,1545 445,1540" f="#7878c4" />
      <path d="M440 1180 L500 1240 L474 1468 Q440 1485 410 1468 Z" fill="url(#rod)" stroke="#000" />
      {/* screw support */}
      <P d="463,1363 628,1363 690,1425 735,1470 567,1472 545,1447 510,1445 450,1387 482,1387" f="#c2c2c2" />
      <ellipse cx="524" cy="1374" rx="14" ry="5" fill="#777" stroke="#000" />
      <ellipse cx="562" cy="1413" rx="60" ry="22" fill="#777" stroke="#000" />
      <P d="450,1387 510,1445 497,1552 438,1495" f="#d2d2d2" />
      <P d="510,1445 545,1447 532,1555 500,1555" f="#8a8a8a" />
      <P d="545,1447 567,1472 558,1575 532,1555" f="#c8c8c8" />
      <P d="567,1472 735,1472 727,1575 558,1575" f="#888" />
      <path d="M555 1447 l14 22 h18 l-16 -20 z" fill="#000" />
      <ellipse cx="549" cy="1511" rx="12" ry="30" fill="#999" stroke="#000" strokeWidth="4" />
      <ellipse cx="605" cy="1457" rx="16" ry="5" fill="#777" stroke="#000" />
      <ellipse cx="696" cy="1458" rx="12" ry="4" fill="#777" stroke="#000" />
      <path d="M545 1308 H613 L602 1433 Q565 1442 535 1430 Z" fill="url(#screw)" stroke="#000" />
      {/* front foot */}
      <path d="M550 1658 L545 1730 Q580 1770 640 1770 L700 1765 L710 1665 Z" fill="url(#violet)" stroke="#000" />
      <path d="M550 1658 V1690 Q610 1725 708 1705 V1665" fill="url(#violet)" stroke="#000" />
      <ellipse cx="630" cy="1657" rx="80" ry="25" fill="#8585d4" stroke="#000" />
      <P d="565,1700 633,1732 633,1770 563,1735" f="#8484d8" />
      <P d="633,1732 704,1732 697,1771 633,1770" f="#5e5ea0" />
      <P d="565,1700 620,1712 705,1708 704,1732 633,1732" f="#7878c4" />
      <ellipse cx="658" cy="1721" rx="14" ry="5" fill="#444" stroke="#000" />
      <path d="M635 1308 H701 L666 1662 Q630 1674 598 1656 Z" fill="url(#rod)" stroke="#000" />
      {/* bearing blocks and rod */}
      <P d="770,690 778,690 757,880 748,880" f="#26303c" />
      <path d="M698 690 H772 L730 1085 Q695 1092 660 1078 Z" fill="url(#rod)" stroke="#000" />
      <path d="M698 690 L680 880" stroke="#123" strokeWidth="6" />
      <P d="655,1080 740,1062 776,1090 778,1113 650,1113" f="#999" />
      <path d="M700 780 H764 L730 1083 Q695 1094 662 1078 Z" fill="url(#rod)" />
      <P d="650,1113 778,1113 758,1308 632,1308" f="#666" />
      <path d="M776 1090 l-16 8 l16 10 z" fill="#222" />
      <P d="458,232 560,232 845,485 845,496 716,496" f="#9c9c9c" />
      <P d="530,308 565,308 600,345 580,356" f="#555" />
      <P d="572,250 632,305 626,390 563,328" f="#999" />
      <P d="632,305 665,340 655,425 626,392" f="#555" />
      <P d="662,340 690,370 682,425 655,425" f="#888" />
      <ellipse cx="672" cy="375" rx="9" ry="20" fill="#aaa" stroke="#000" strokeWidth="4" />
      <P d="716,496 844,496 828,690 698,690" f="#666" />
      <path d="M845 470 l-14 12 l13 12 z" fill="#222" />
      {/* upper collars */}
      <path d="M502 170 L497 252 Q530 275 570 275 L575 235 Z" fill="url(#violet)" stroke="#000" />
      <path d="M520 190 V232 L555 250 L572 252" fill="none" stroke="#000" />
      <path d="M690 370 L686 440 Q730 475 840 462 L850 412 L735 405 Z" fill="url(#violet)" stroke="#000" />
      <P d="708,388 735,412 778,415 778,454 708,422" f="#8484d8" />
      <P d="778,415 845,415 840,455 778,454" f="#5e5ea0" />
      {/* carriage plate */}
      <P d="375,232 637,496 548,1308 285,1044" f="#c8c8c8" />
      <P d="375,232 458,232 716,496 637,496" f="#bebebe" />
      <P d="637,496 716,496 630,1308 548,1308" f="#868686" />
      {plateHoles.map(([x, y]) => (
        <ellipse key={`${x}-${y}`} cx={x} cy={y} rx="5" ry="15" fill="#999" stroke="#000" />
      ))}
      {/* motor */}
      <P d="1022,412 1140,370 1330,345 1327,358 1275,375 1150,395" f="#8a8a8a" />
      <P d="1022,414 1150,392 1272,388 1310,360 1285,565 1250,572 1060,572 1008,548" f="#000" />
      <P d="1272,358 1308,355 1306,374 1270,376" f="#777" />
      <P d="1010,553 1062,572 1052,632 1003,615" f="#9a9a9a" />
      <P d="1060,572 1250,572 1250,632 1052,632" f="#777" />
      <P d="1250,572 1287,556 1282,615 1250,630" f="#333" />
      <path d="M1123 632 V605 Q1128 577 1155 577 Q1183 577 1187 605 V634 Z" fill="#888" stroke="#000" />
      <ellipse cx="1155" cy="607" rx="17" ry="18" fill="#666" stroke="#000" strokeWidth="4" />
      {/* top plate */}
      <P d="480,64 795,68 1255,146 1363,256 1050,331 740,331" f="#666" />
      <P d="480,64 740,331 733,412 470,146" f="#5e5e5e" />
      <P d="740,331 1050,331 1043,412 733,412" f="#4b4b4b" />
      <P d="1050,331 1363,256 1357,337 1043,412" f="#444" />
      {topHoles.map(([x, y, a, b]) => (
        <ellipse key={`${x}-${y}`} cx={x} cy={y} rx={a} ry={b} fill="#4c4c4c" stroke="#000" />
      ))}
      <ellipse cx="1143" cy="200" rx="107" ry="32" fill="url(#well)" stroke="#000" />
      <path d="M1103 172 L1097 226 Q1140 236 1187 230 L1191 178 Z" fill="url(#steel)" stroke="#000" />
      <ellipse cx="1146" cy="182" rx="45" ry="12" fill="#aaa" stroke="#000" />
      <path d="M1116 148 L1113 185 Q1145 196 1181 185 L1184 150 Z" fill="url(#steel)" stroke="#000" />
      <ellipse cx="1150" cy="142" rx="46" ry="16" fill="#999" stroke="#000" />
      <ellipse cx="1150" cy="137" rx="46" ry="15" fill="#b0b0b0" stroke="#000" />
      <ellipse cx="1151" cy="136" rx="23" ry="8" fill="#888" stroke="#000" />
      {/* large pulley */}
      <path d="M580 123 L577 182 Q600 220 707 225 Q815 228 831 198 L836 145 Z" fill="url(#red)" stroke="#000" />
      <ellipse cx="708" cy="133" rx="128" ry="38" fill="#a82a00" stroke="#000" transform="rotate(4 708 133)" />
      <ellipse cx="708" cy="133" rx="24" ry="7" fill="#6c1c00" stroke="#000" />
      {/* spindle */}
      <P d="100,715 134,715 128,742 94,756" f="#999" />
      <path d="M150 1425 L133 1618 Q160 1640 238 1632 L257 1435 Z" fill="url(#dark)" stroke="#000" />
      <path d="M98 1030 L62 1378 Q80 1425 190 1438 Q330 1442 355 1412 L392 1085 Z" fill="url(#dark)" stroke="#000" />
      <P d="75,770 125,740 430,770 535,877 258,874 230,848 122,820" f="#858585" />
      <P d="75,770 122,820 98,1037 48,988" f="#8a8a8a" />
      <P d="122,820 230,848 208,1063 98,1037" f="#969696" />
      <P d="230,848 258,874 233,1092 208,1063" f="#888" />
      <P d="258,874 535,877 515,1092 233,1092" f="#666" />
      <ellipse cx="232" cy="911" rx="7" ry="19" fill="#777" stroke="#000" />
      <ellipse cx="220" cy="1020" rx="7" ry="19" fill="#777" stroke="#000" />
      <path d="M157 510 L127 788 Q150 830 290 842 Q400 843 421 818 L452 540 Z" fill="url(#dark)" stroke="#000" />
      <ellipse cx="304" cy="526" rx="149" ry="42" fill="#686868" stroke="#000" transform="rotate(6 304 526)" />
      {/* reference planes */}
      <g fill="none" strokeWidth="3">
        <polygon points="903,277 1172,277 1144,547 873,547" stroke="#ff8080" />
        <polygon points="843,368 1115,368 1203,457 936,457" stroke="#2a8ae0" />
        <polygon points="994,232 1082,322 1053,592 965,503" stroke="#a0f030" />
        <path d="M1037 280 L1022 410" stroke="#2a8ae0" />
        <path d="M890 411 H1022" stroke="#80e020" />
        <path d="M980 370 L1022 410" stroke="#ff8080" />
      </g>
    </g>
    {/* axis triad */}
    <g strokeLinejoin="round">
      <path d="M450 1214 L454 1170 H458 L454 1214 Z" fill="#7ab8f8" stroke="#5a90d8" />
      <path d="M451 1171 L458 1153 L461 1172 Q456 1175 451 1171 Z" fill="#7ab8f8" stroke="#5a80c0" />
      <rect x="403" y="1216" width="42" height="6" fill="#80e080" stroke="#60b060" />
      <path d="M385 1219 L405 1213 V1225 Z" fill="#90d898" stroke="#60a868" />
      <path d="M436 1205 L448 1217" stroke="#d09090" strokeWidth="6" />
      <circle cx="435" cy="1204" r="5" fill="#e04040" stroke="#c07070" strokeWidth="2" />
      <path d="M429 1198 l8 2 l-5 5 z" fill="#903030" />
      <circle cx="451" cy="1219" r="8" fill="#f4f060" stroke="#b8b070" />
      <circle cx="448" cy="1216" r="3" fill="#ffc840" />
    </g>
    <g fontFamily="Liberation Serif, serif" fontSize="16">
      <text x="454" y="1149" fill="#5a78d8">Z</text>
      <text x="420" y="1199" fill="#d84860">X</text>
    </g>
  </svg>
);

/* ---------- page ---------- */

const menus: [string, string, string][] = [
  ["", "Ф", "айл"], ["", "Р", "едактор"], ["В", "ы", "делить"], ["", "В", "ид"], ["Опера", "ц", "ии"],
  ["С", "п", "ецификация"], ["С", "е", "рвис"], ["", "О", "кно"], ["", "С", "правка"], ["", "Б", "иблиотеки"],
];
const sideSmall = ["*solid", "cubeBlue", "curve", "surface", "dots", "aux", "clip", "compass", "filter", "grid", "book", "rough", "angle"];
const sideBig = ["|", "addHole", "fromFile", "mirror", "|", "moveBox", "turnBox", "grayFix", "grayTurn", "|", "grayLink", "lock", "|", "toDrawing", "toSpec"];

export default function App() {
  return (
    <Shell>
      <GlobalStyle />
      <TitleBar>
        <Backdrop aria-hidden="true">
          <Ghost $w={28}><Favicon $c="#dc9a9a" /></Ghost>
          <Ghost $w={38}><Favicon $c="#e4b0b0" /></Ghost>
          <Ghost $w={94}><Favicon $c="#d8cc9c" /></Ghost>
          <Ghost $w={106}><Favicon $c="#8ab8f0" /></Ghost>
          {ghosts.map(([c, ring, active], i) => (
            <Ghost key={i} $w={107} $active={active}>
              <Favicon $c={c} $ring={ring} />
              <GhostText />
            </Ghost>
          ))}
        </Backdrop>
        <AppName>
          <svg width="19" height="20" viewBox="0 0 19 20">
            <circle cx="9.5" cy="10" r="9" fill="#1f6cb8" stroke="#0c4a8a" />
            <circle cx="9.5" cy="10" r="7" fill="none" stroke="#fff" />
            <path d="M6 4 V16 M13 5 L7 10 L13 15 M3 10 H7" fill="none" stroke="#fff" strokeWidth="1.5" />
          </svg>
          {"КОМПАС-3D V16  x64 - ось_Z_250мм.a3d"}
        </AppName>
        <WinButtons>
          <WinButton $w={35} aria-label="Свернуть">
            <svg width="17" height="18"><rect x="1" y="11" width="15" height="4" fill="#fff" stroke="#445" /></svg>
          </WinButton>
          <WinButton $w={33} aria-label="Развернуть">
            <svg width="18" height="18" fill="none" stroke="#fff" strokeWidth="2">
              <path d="M6 5 V2 H16 V12 H13" />
              <rect x="3" y="6" width="10" height="10" />
              <rect x="6" y="9" width="4" height="4" strokeWidth="1" />
            </svg>
          </WinButton>
          <WinButton $w={60} $close aria-label="Закрыть">
            <svg width="16" height="16">
              <path d="M3 2 L13 14 M13 2 L3 14" stroke="#533" strokeWidth="5" />
              <path d="M3 2 L13 14 M13 2 L3 14" stroke="#fff" strokeWidth="3" />
            </svg>
          </WinButton>
        </WinButtons>
      </TitleBar>

      <MenuBar>
        <Grip />
        {menus.map(([a, u, b]) => (
          <MenuItem key={a + u + b}>{a}<u>{u}</u>{b}</MenuItem>
        ))}
      </MenuBar>

      <ToolRow>
        <Bar>
          <Grip />
          <Tools items={["newDoc", "v", "open", "save", "|", "print", "v", "|", "preview", "v", "|", "cut", "copy", "paste", "|", "brush", "props", "|", "undo", "redo", "|", "cabinet", "askTable", "fx", "|", "swap12", "|", "help"]} />
          <Overflow />
        </Bar>
        <Bar>
          <Grip />
          <Tools items={["zoomDoc", "|", "zoomRect", "|", "zoomPM"]} />
          <Combo label="Масштаб" value="0.4019" w={66} />
          <Tools items={["|", "rotate", "orient", "v", "|", "wire", "hidden", "thin", "shade", "*shadeLine", "|", "torchDim", "v", "torchBox", "v", "|", "yellowCube", "section", "v", "|", "rebuild", "|", "crane"]} />
          <Overflow />
        </Bar>
      </ToolRow>
      <ToolRow>
        <Bar>
          <Grip />
          <Tools items={["step"]} />
          <Combo label="Шаг курсора" value="1.0" w={64} />
          <Tools items={["*snap", "|", "layers"]} />
          <Combo label="Слой" value="Системный слой (0)" w={142} />
          <Tools items={["|", "sketch", "editGray", "|", "axes", "|", "assembly"]} />
          <Combo label="Компонент" value="(-) Сборка (Тел-0, Сборочных единиц-0)" w={140} />
          <Tools items={["|", "treeCheck"]} />
          <Combo label="Тип загрузки" value="Полный" w={126} />
          <Overflow />
        </Bar>
      </ToolRow>

      <TabStrip>
        {tabs.map(([label, w, a, b], i) => (
          <Tab key={label} $w={w} $a={a} $b={b} $first={i === 0}>
            <Icon name="part" size={20} />
            <TabLabel>{label}</TabLabel>
          </Tab>
        ))}
        <Tab $w={196} $a="#ffffbc" $b="#e8d49c" $bold>
          <Icon name="asm" size={20} />
          <TabLabel>ось_Z_250мм.a3d</TabLabel>
          <Icon name="close" size={12} />
        </Tab>
        <StripMenu aria-label="Список документов"><Triangle $s={4} /></StripMenu>
      </TabStrip>

      <Work>
        <SideColumn>
          <SideBar>
            <SideGripTop />
            {sideSmall.map((n) => {
              const on = n.startsWith("*");
              const name = on ? n.slice(1) : n;
              return (
                <SideItem key={n}>
                  <SideGrip />
                  <SideButton $on={on} aria-label={name}><Icon name={name} size={19} /></SideButton>
                </SideItem>
              );
            })}
            {sideBig.map((n, i) =>
              n === "|" ? <SideSep key={i} /> : (
                <SideButton key={i} $big aria-label={n}><Icon name={n} /></SideButton>
              )
            )}
          </SideBar>
          <SideEnd>
            <svg width="8" height="8"><path d="M1 0 v8 M3 0 v8 l4 -4 z" stroke="#000" /></svg>
          </SideEnd>
        </SideColumn>
        <Frame>
          <Panel>
            <PanelHead>
              <span>Дерево модели</span>
              <HeadButton aria-label="Закрепить"><Icon name="pinned" size={12} /></HeadButton>
              <HeadButton aria-label="Закрыть"><Icon name="close" size={12} /></HeadButton>
            </PanelHead>
            <PanelTools>
              <Tools items={["*tree"]} />
              <ToolGroup>
                <Tools items={["listMode", "v", "|", "docTree", "docGray"]} />
              </ToolGroup>
            </PanelTools>
            <TreeBox>
              <TreeList>
                <TreeRow><TreeText $root>) Сборка (Тел-0, Сборочных единиц-0, Деталей-2</TreeText></TreeRow>
                <TreeRow>
                  <svg width="15" height="20" viewBox="0 0 15 20"><path d="M0 2 h11 v11 l-4 4 h-7 M0 13 h15" fill="#c4ecf8" stroke="#1a6090" /></svg>
                  <TreeText>Системы координат</TreeText>
                </TreeRow>
                <TreeRow>
                  <svg width="15" height="20" viewBox="0 0 15 20"><path d="M0 5 h3 M0 14 h3 M3 3 h4 l3 3 v3 h-7 z M3 13 h3 l3 2 v3 h-6 z" fill="#1ba8ff" stroke={NAVY} /></svg>
                  <TreeText>Компоненты</TreeText>
                </TreeRow>
                <TreeRow>
                  <svg width="15" height="24" viewBox="0 0 15 24"><path d="M0 8 L6 1 Q12 0 12 5 L0 18 M0 12 L8 4 M15 9 L0 23" fill="none" stroke="#1a1a90" strokeWidth="1.4" /></svg>
                  <TreeText $sel>Сопряжения</TreeText>
                </TreeRow>
              </TreeList>
              <ScrollBar>
                <ScrollArrow aria-label="Влево"><i /></ScrollArrow>
                <ScrollTrack><ScrollThumb><i /><i /><i /></ScrollThumb></ScrollTrack>
                <ScrollArrow $right aria-label="Вправо"><i /></ScrollArrow>
              </ScrollBar>
            </TreeBox>
            <PanelTabs>
              <PanelTab $on>Построение</PanelTab>
              <PanelTab>Исполнения</PanelTab>
              <PanelTab>Зоны</PanelTab>
            </PanelTabs>
          </Panel>
          <Viewport><Scene /></Viewport>
        </Frame>
      </Work>

      <Properties>
        <LongGrip />
        <PropInput aria-label="Панель свойств" />
      </Properties>
      <StatusBar>
        <p>Щелкните левой кнопкой мыши на объекте для его выделения (вместе с Ctrl - добавить к выделенным)</p>
        <StatusCell />
      </StatusBar>
    </Shell>
  );
}
